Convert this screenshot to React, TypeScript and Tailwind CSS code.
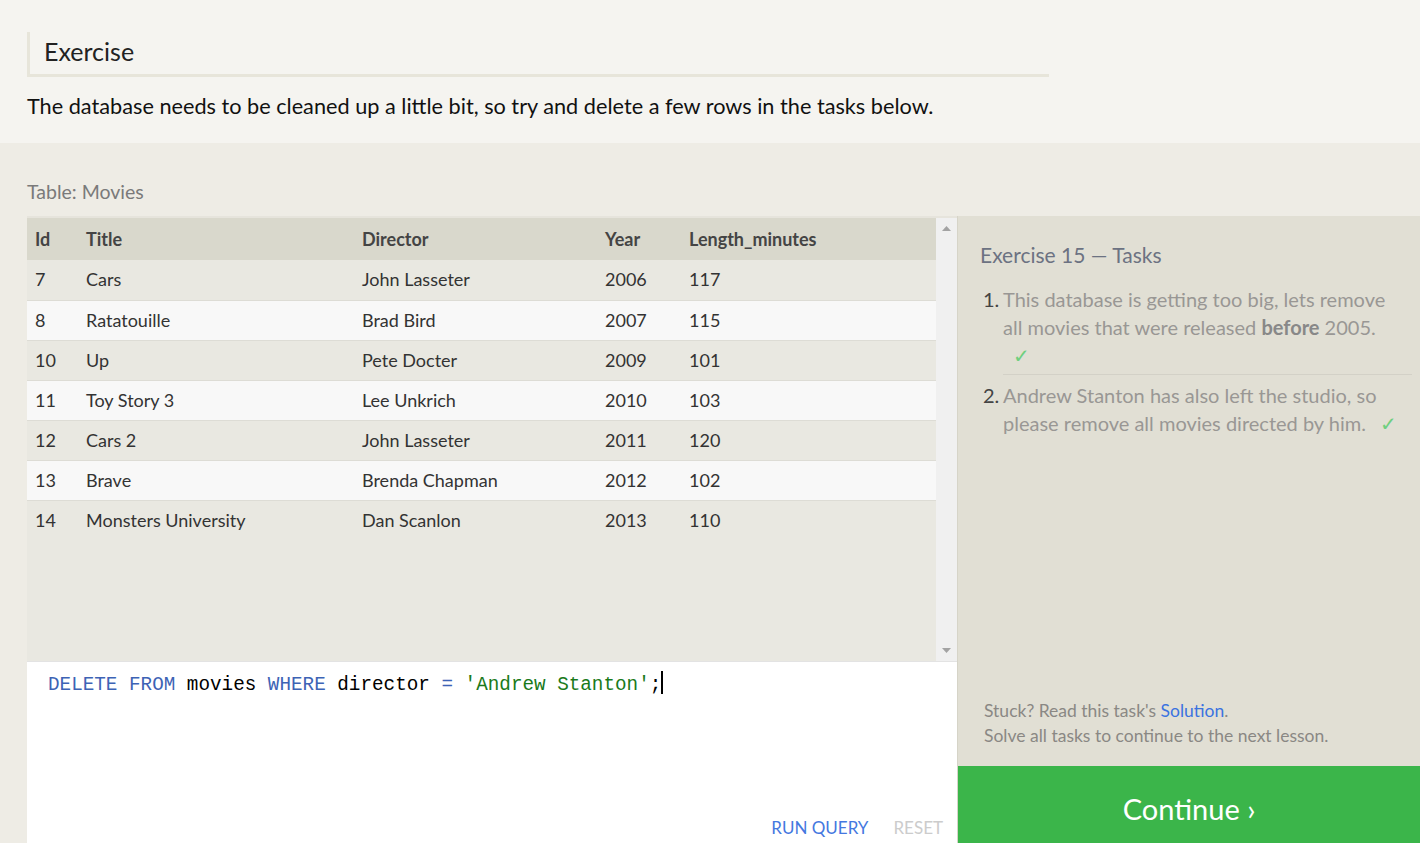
import React from "react";

type Movie = {
  readonly id: number;
  readonly title: string;
  readonly director: string;
  readonly year: number;
  readonly length: number;
};

const movies: Movie[] = [
  { id: 7, title: "Cars", director: "John Lasseter", year: 2006, length: 117 },
  { id: 8, title: "Ratatouille", director: "Brad Bird", year: 2007, length: 115 },
  { id: 10, title: "Up", director: "Pete Docter", year: 2009, length: 101 },
  { id: 11, title: "Toy Story 3", director: "Lee Unkrich", year: 2010, length: 103 },
  { id: 12, title: "Cars 2", director: "John Lasseter", year: 2011, length: 120 },
  { id: 13, title: "Brave", director: "Brenda Chapman", year: 2012, length: 102 },
  { id: 14, title: "Monsters University", director: "Dan Scanlon", year: 2013, length: 110 },
];

const font = "font-['Lato','Open_Sans',sans-serif]";

const Check = () => <span className="text-[#6fcf7f]">✓</span>;

export default function App() {
  return (
    <div className={`${font} w-[1420px] h-[843px] overflow-hidden bg-[#eeece5] flex flex-col`}>
      {/* Intro */}
      <div className="bg-[#f5f4f0] h-[143px] px-[27px] pt-[32px] shrink-0">
        <div className="w-[1022px] h-[45px] border-l-[3px] border-b-[3px] border-[#e7e5da] pl-[14px] flex items-center">
          <h1 className="text-[25px] text-[#222] leading-none -mt-[4px]">Exercise</h1>
        </div>
        <p className="mt-[15px] text-[21.7px] text-[#111] leading-[28px]">
          The database needs to be cleaned up a little bit, so try and delete a few rows in the tasks below.
        </p>
      </div>

      {/* Workspace */}
      <div className="flex-1 pl-[27px] pt-[37px] flex flex-col">
        <div className="text-[19.5px] text-[#7a7a7a] leading-[24px] h-[24px]">Table: Movies</div>
        <div className="mt-[12px] flex flex-1 min-h-0">
          {/* Left column: table + editor */}
          <div className="w-[930px] flex flex-col border-t-2 border-[#e6e4dc]">
            <div className="h-[443px] flex bg-[#e9e8e1]">
              <div className="flex-1">
                <table className="w-full text-[18px] text-[#333] border-collapse">
                  <thead>
                    <tr className="bg-[#d9d8cc] h-[42px] text-left text-[#444]">
                      <th className="pl-[8px] w-[59px] font-bold">Id</th>
                      <th className="w-[276px] font-bold">Title</th>
                      <th className="w-[243px] font-bold">Director</th>
                      <th className="w-[84px] font-bold">Year</th>
                      <th className="font-bold">Length_minutes</th>
                    </tr>
                  </thead>
                  <tbody>
                    {movies.map((m, i) => (
                      <tr
                        key={m.id}
                        className={`h-[40px] ${i < movies.length - 1 ? "border-b border-[#dddcd5]" : ""} ${i % 2 === 0 ? "bg-[#e9e8e1]" : "bg-[#f8f8f8]"}`}
                      >
                        <td className="pl-[8px]">{m.id}</td>
                        <td>{m.title}</td>
                        <td>{m.director}</td>
                        <td>{m.year}</td>
                        <td>{m.length}</td>
                      </tr>
                    ))}
                  </tbody>
                </table>
              </div>
              {/* Scrollbar */}
              <div className="w-[21px] bg-[#f0f0f0] flex flex-col justify-between items-center py-[8px]">
                <svg width="9" height="5" viewBox="0 0 9 5"><path d="M0 5 L4.5 0 L9 5 Z" fill="#a3a3a3" /></svg>
                <svg width="9" height="5" viewBox="0 0 9 5"><path d="M0 0 L4.5 5 L9 0 Z" fill="#a3a3a3" /></svg>
              </div>
            </div>
            {/* Editor */}
            <div className="flex-1 bg-white border-t border-[#e3e3e3] relative">
              <div className="pl-[21px] pt-[10px] font-['Liberation_Mono',monospace] text-[19.3px] leading-[26px] whitespace-pre">
                <span className="text-[#3d63b5]">DELETE FROM</span>
                <span className="text-black"> movies </span>
                <span className="text-[#3d63b5]">WHERE</span>
                <span className="text-black"> director </span>
                <span className="text-[#3d63b5]">=</span>
                <span className="text-black"> </span>
                <span className="text-[#1a7a1a]">'Andrew Stanton'</span>
                <span className="text-black">;</span>
                <span className="inline-block w-[2px] h-[23px] bg-black align-middle -mt-[4px]" />
              </div>
              <div className="absolute right-[14px] bottom-[4px] flex gap-[25px] text-[17px] leading-[22px]">
                <span className="text-[#4478e0]">RUN QUERY</span>
                <span className="text-[#cccccc]">RESET</span>
              </div>
            </div>
          </div>

          {/* Right column: tasks */}
          <div className="flex-1 flex flex-col border-l border-[#d6d4c8]">
            <div className="flex-1 bg-[#e1dfd4] pl-[22px] pr-[8px] pt-[25px] flex flex-col">
              <h2 className="text-[21px] text-[#6c7282] leading-[28px]">Exercise 15 — Tasks</h2>
              <ol className="mt-[16px] text-[20px] leading-[28px] text-[#999794]">
                <li className="flex">
                  <span className="w-[23px] pl-[3px] text-[#444]">1.</span>
                  <div className="flex-1 pb-[5px] border-b border-[#d3d1c7]">
                    <div className="pr-[16px]">
                      This database is getting too big, lets remove all movies that were released{" "}
                      <b className="text-[#888]">before</b> 2005.
                      <br />
                      <span className="ml-[10px]"><Check /></span>
                    </div>
                  </div>
                </li>
                <li className="flex pt-[6px]">
                  <span className="w-[23px] pl-[3px] text-[#444]">2.</span>
                  <div className="flex-1">
                    Andrew Stanton has also left the studio, so please remove all movies directed by{" "}
                    <span className="whitespace-nowrap">
                      him.<span className="ml-[14px]"><Check /></span>
                    </span>
                  </div>
                </li>
              </ol>
              <div className="mt-auto pb-[18px] pl-[4px] text-[17.5px] leading-[25px] text-[#8a8884]">
                <div>
                  Stuck? Read this task's <span className="text-[#3b73e0]">Solution</span>.
                </div>
                <div>Solve all tasks to continue to the next lesson.</div>
              </div>
            </div>
            <div className="h-[77px] bg-[#3bb54a] flex items-center justify-center">
              <span className="text-white text-[29px] mt-[9px]">Continue ›</span>
            </div>
          </div>
        </div>
      </div>
    </div>
  );
}
